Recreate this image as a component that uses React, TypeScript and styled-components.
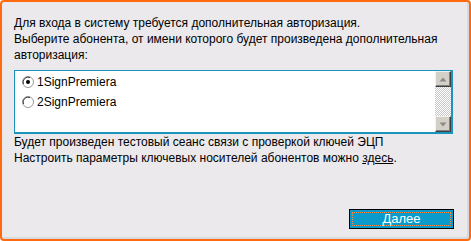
import React from "react";
import styled, { createGlobalStyle } from "styled-components";

const Global = createGlobalStyle`
  html, body { margin: 0; padding: 0; background: #ffffff; }
  #root { width: 471px; height: 241px; }
`;

const Frame = styled.div`
  box-sizing: border-box;
  width: 471px;
  height: 241px;
  border: 2px solid #ff6a10;
  border-radius: 4px;
  background: #ebe9ec;
  box-shadow: inset -2px -2px 0 #d9d8db;
  padding: 13px 16px 10px 12px;
  display: flex;
  flex-direction: column;
  font-family: "Liberation Sans", Arial, sans-serif;
  font-size: 12px;
  line-height: 16px;
  color: #000;
`;

const Para = styled.div`
  white-space: nowrap;
`;

const ListBox = styled.div`
  margin-top: 7px;
  height: 64px;
  box-sizing: border-box;
  border: 1px solid #1a93bd;
  border-right-width: 2px;
  border-bottom-width: 2px;
  background: #fff;
  display: flex;
`;

const Items = styled.div`
  flex: 1;
  padding: 1px 0 0 7px;
  display: flex;
  flex-direction: column;
`;

const Item = styled.label`
  display: flex;
  align-items: center;
  gap: 3px;
  height: 20px;
`;

const Scroll = styled.div`
  width: 16px;
  display: flex;
  flex-direction: column;
  background: repeating-conic-gradient(#c8c8c8 0 25%, #ffffff 0 50%) 0 0 / 2px 2px;
`;

const ScrollBtn = styled.div`
  width: 16px;
  height: 16px;
  box-sizing: border-box;
  background: #d4d0c8;
  border-top: 1px solid #f2f2f2;
  border-left: 1px solid #f2f2f2;
  border-right: 1px solid #404040;
  border-bottom: 1px solid #404040;
  box-shadow: inset -1px -1px 0 #808080;
  display: flex;
  align-items: center;
  justify-content: center;
`;

const Track = styled.div`
  flex: 1;
`;

const Link = styled.span`
  text-decoration: underline;
`;

const Footer = styled.div`
  margin-top: auto;
  display: flex;
  justify-content: flex-end;
  margin-right: -1px;
`;

const Button = styled.button`
  width: 105px;
  height: 20px;
  box-sizing: border-box;
  border: 1px solid #000;
  background: #0a9acb;
  color: #fff;
  font-family: "Liberation Sans", Arial, sans-serif;
  font-size: 13px;
  padding: 2px;
  display: flex;
  cursor: pointer;
`;

const Focus = styled.span`
  flex: 1;
  border: 1px dotted #ff8a3a;
  display: flex;
  align-items: center;
  justify-content: center;
  line-height: 12px;
`;

const Radio = ({ checked }: { checked?: boolean }) => (
  <svg width="12" height="12" viewBox="0 0 12 12">
    <circle cx="6" cy="6" r="5.5" fill="#fff" stroke="#9a9a9a" />
    <path d="M1.5 8 A5 5 0 0 1 8 1.5" stroke="#404040" fill="none" strokeWidth="1" />
    {checked && <circle cx="6" cy="6" r="2" fill="#000" />}
  </svg>
);

const Arrow = ({ up }: { up?: boolean }) => (
  <svg width="8" height="5" viewBox="0 0 8 5">
    <path d={up ? "M4 0.5 L7.5 4.5 L0.5 4.5 Z" : "M0.5 0.5 L7.5 0.5 L4 4.5 Z"} fill="#8a8a8a" />
  </svg>
);

export default function App() {
  return (
    <>
      <Global />
      <Frame>
        <Para>Для входа в систему требуется дополнительная авторизация.</Para>
        <Para>Выберите абонента, от имени которого будет произведена дополнительная</Para>
        <Para>авторизация:</Para>
        <ListBox>
          <Items>
            <Item>
              <Radio checked />
              1SignPremiera
            </Item>
            <Item>
              <Radio />
              2SignPremiera
            </Item>
          </Items>
          <Scroll>
            <ScrollBtn>
              <Arrow up />
            </ScrollBtn>
            <Track />
            <ScrollBtn>
              <Arrow />
            </ScrollBtn>
          </Scroll>
        </ListBox>
        <Para>Будет произведен тестовый сеанс связи с проверкой ключей ЭЦП</Para>
        <Para>
          Настроить параметры ключевых носителей абонентов можно <Link>здесь</Link>.
        </Para>
        <Footer>
          <Button>
            <Focus>Далее</Focus>
          </Button>
        </Footer>
      </Frame>
    </>
  );
}
